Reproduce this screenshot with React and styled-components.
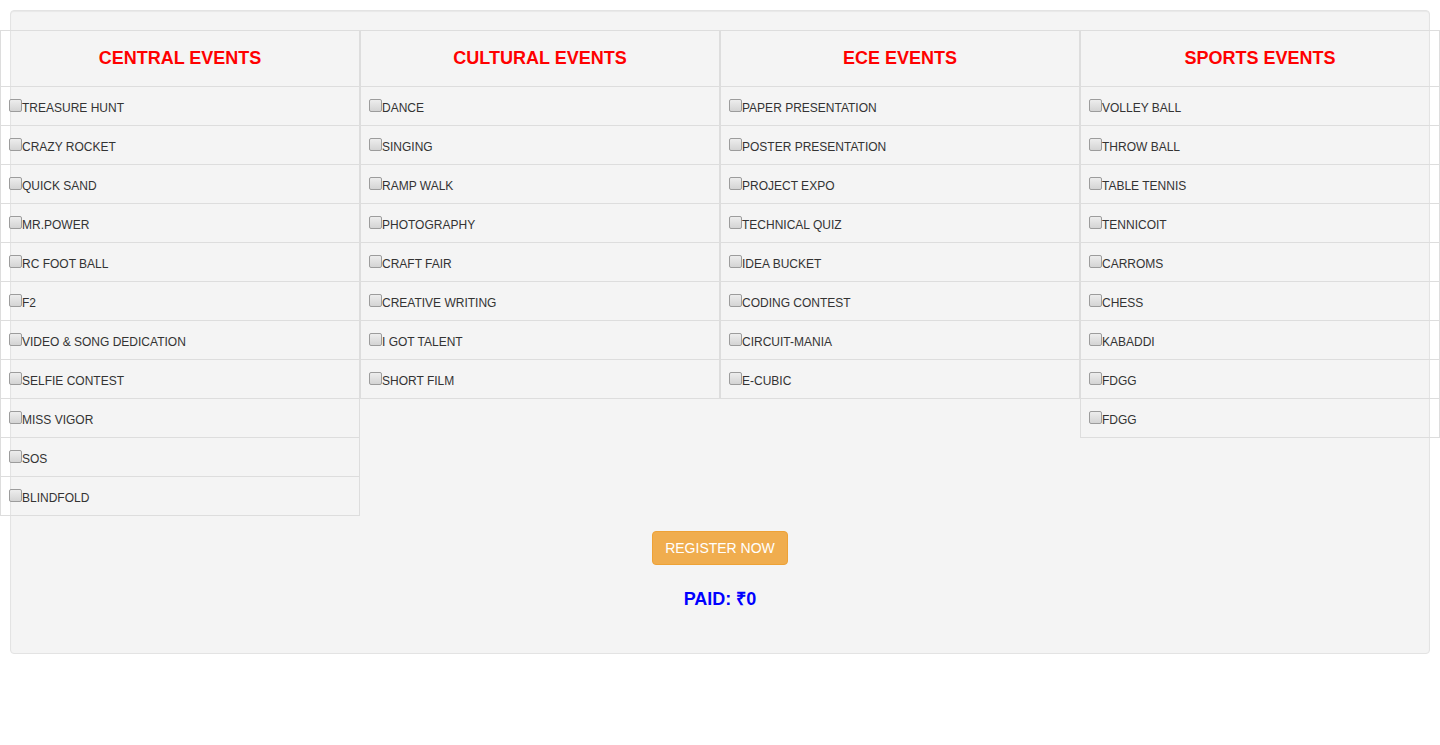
import React from "react";
import styled, { createGlobalStyle } from "styled-components";

const GlobalStyle = createGlobalStyle`
  body {
    margin: 0;
    background: #fff;
    font-family: "Liberation Sans", Arial, sans-serif;
    color: #333;
  }
`;

const Well = styled.div`
  margin: 10px;
  padding: 19px 19px 44px;
  background-color: #f4f4f4;
  border: 1px solid #e3e3e3;
  border-radius: 4px;
  box-shadow: inset 0 1px 1px rgba(0, 0, 0, 0.05);
`;

const EventsGrid = styled.div`
  display: grid;
  grid-template-columns: repeat(4, 360px);
  align-items: start;
  margin: 0 -30px;
`;

const Column = styled.div`
  box-sizing: border-box;
  border: 1px solid #ddd;
  border-bottom: none;
`;

const Header = styled.h4`
  box-sizing: border-box;
  margin: 0;
  height: 56px;
  padding-bottom: 1px;
  display: flex;
  align-items: center;
  justify-content: center;
  border-bottom: 1px solid #ddd;
  font-size: 18px;
  font-weight: 700;
  line-height: 20px;
  color: #ff0000;
`;

const Row = styled.label`
  display: block;
  box-sizing: border-box;
  height: 39px;
  padding: 8px;
  border-bottom: 1px solid #ddd;
  font-size: 12px;
  line-height: 20px;
  color: #333;
  white-space: nowrap;
`;

const Check = styled.input`
  appearance: none;
  -webkit-appearance: none;
  box-sizing: border-box;
  width: 13px;
  height: 13px;
  margin: 4px 0 0;
  vertical-align: baseline;
  border: 1px solid #9c9c9c;
  border-radius: 2px;
  background: linear-gradient(#ededed, #d4d4d4);
`;

const Actions = styled.div`
  display: flex;
  flex-direction: column;
  align-items: center;
`;

const RegisterButton = styled.button`
  margin-top: 15px;
  height: 34px;
  padding: 6px 12px;
  font-family: "Liberation Sans", Arial, sans-serif;
  font-size: 14px;
  line-height: 20px;
  color: #fff;
  background-color: #f0ad4e;
  border: 1px solid #eea236;
  border-radius: 4px;
  cursor: pointer;
`;

const Paid = styled.h4`
  margin: 24px 0 0;
  font-size: 18px;
  font-weight: 700;
  line-height: 20px;
  color: #0000ff;
`;

const events = [
  {
    title: "CENTRAL EVENTS",
    items: [
      "TREASURE HUNT",
      "CRAZY ROCKET",
      "QUICK SAND",
      "MR.POWER",
      "RC FOOT BALL",
      "F2",
      "VIDEO & SONG DEDICATION",
      "SELFIE CONTEST",
      "MISS VIGOR",
      "SOS",
      "BLINDFOLD",
    ],
  },
  {
    title: "CULTURAL EVENTS",
    items: [
      "DANCE",
      "SINGING",
      "RAMP WALK",
      "PHOTOGRAPHY",
      "CRAFT FAIR",
      "CREATIVE WRITING",
      "I GOT TALENT",
      "SHORT FILM",
    ],
  },
  {
    title: "ECE EVENTS",
    items: [
      "PAPER PRESENTATION",
      "POSTER PRESENTATION",
      "PROJECT EXPO",
      "TECHNICAL QUIZ",
      "IDEA BUCKET",
      "CODING CONTEST",
      "CIRCUIT-MANIA",
      "E-CUBIC",
    ],
  },
  {
    title: "SPORTS EVENTS",
    items: [
      "VOLLEY BALL",
      "THROW BALL",
      "TABLE TENNIS",
      "TENNICOIT",
      "CARROMS",
      "CHESS",
      "KABADDI",
      "FDGG",
      "FDGG",
    ],
  },
];

const App = () => {
  return (
    <>
      <GlobalStyle />
      <Well>
        <EventsGrid>
          {events.map((group) => (
            <Column key={group.title}>
              <Header>{group.title}</Header>
              {group.items.map((item, i) => (
                <Row key={i}>
                  <Check type="checkbox" />
                  {item}
                </Row>
              ))}
            </Column>
          ))}
        </EventsGrid>
        <Actions>
          <RegisterButton>REGISTER NOW</RegisterButton>
          <Paid>PAID: ₹0</Paid>
        </Actions>
      </Well>
    </>
  );
};

export default App;
